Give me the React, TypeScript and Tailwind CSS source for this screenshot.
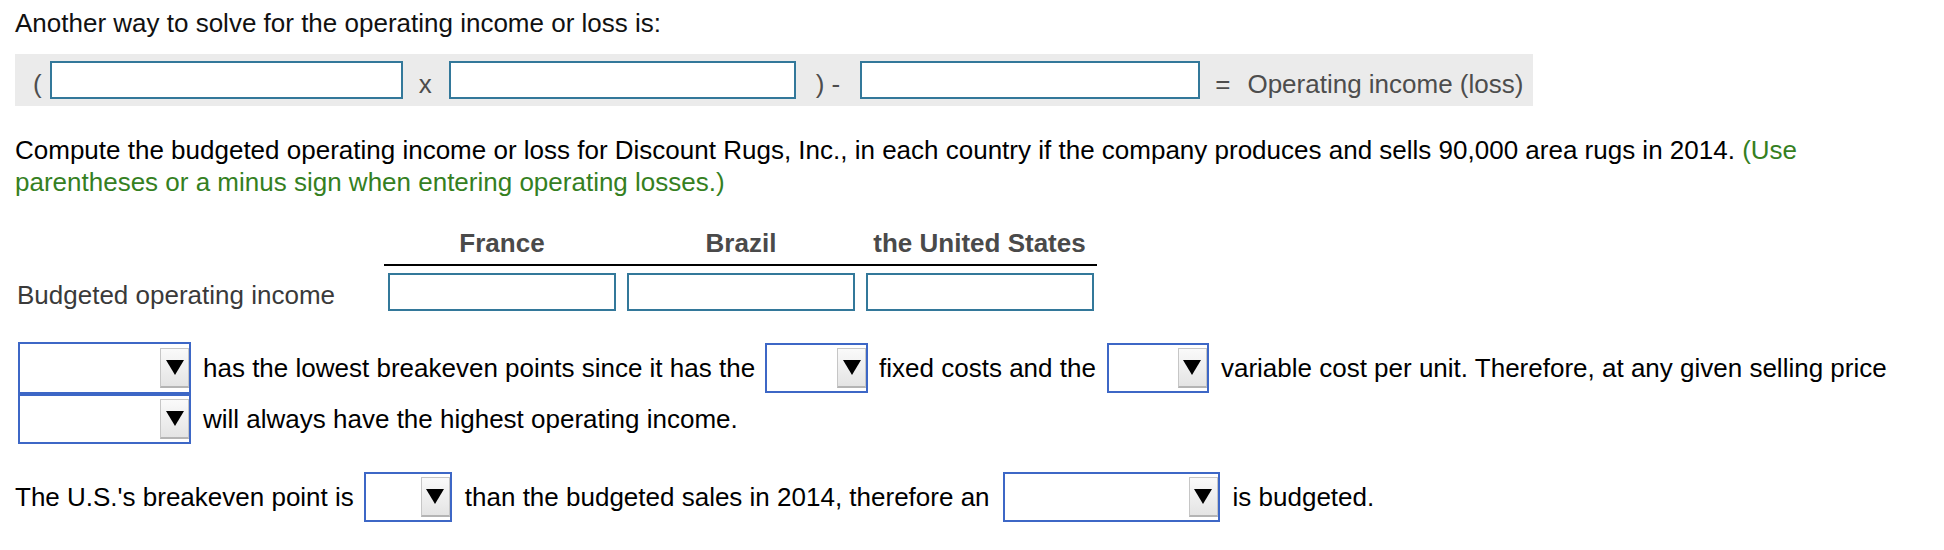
import React from "react";

/**
 * Select box with a grey arrow button on its right edge.
 */
function Dropdown({ width, height, className = "" }: { width: string; height: string; className?: string }) {
  return (
    <div
      className={`${width} ${height} ${className} shrink-0 flex items-center justify-end border-2 border-[#3d67c6] bg-white`}
    >
      <div className="w-[29px] h-[40px] flex items-center justify-center border border-[#c6c6c6] border-b-2 border-b-[#b4b4b4] bg-gradient-to-b from-[#fafafa] to-[#e4e4e4]">
        <svg width="18" height="15" viewBox="0 0 18 15">
          <polygon points="0,0 18,0 9,15" fill="#000" />
        </svg>
      </div>
    </div>
  );
}

function Box({ width }: { width: string }) {
  return <div className={`${width} h-[38px] shrink-0 border-2 border-[#33789a] bg-white`} />;
}

export default function App() {
  return (
    <div className="w-[1944px] h-[550px] bg-white text-[26px] text-black font-['Liberation_Sans',Arial,sans-serif] overflow-hidden">
      {/* Title */}
      <div className="pt-[8px] pl-[15px] leading-[30px] text-[#111]">
        Another way to solve for the operating income or loss is:
      </div>

      {/* Formula */}
      <div className="mt-[16px] ml-[15px] w-[1518px] h-[52px] bg-[#ebebeb] flex items-center text-[#4d4d4d] leading-none">
        <span className="ml-[18px] mr-[8px] pt-[8px]">(</span>
        <Box width="w-[353px]" />
        <span className="ml-[16px] mr-[17px] pt-[8px]">x</span>
        <Box width="w-[347px]" />
        <span className="ml-[20px] mr-[20px] pt-[8px]">) -</span>
        <Box width="w-[340px]" />
        <span className="ml-[15px] mr-[17px] pt-[8px]">=</span>
        <span className="pt-[8px]">Operating income (loss)</span>
      </div>

      {/* Instructions */}
      <p className="mt-[28px] pl-[15px] w-[1830px] leading-[32px]">
        Compute the budgeted operating income or loss for Discount Rugs, Inc., in each country if the company produces
        and sells 90,000 area rugs in 2014.{" "}
        <span className="text-[#35801f]">(Use parentheses or a minus sign when entering operating losses.)</span>
      </p>

      {/* Table */}
      <div className="mt-[30px] ml-[384px] w-[713px] flex border-b-2 border-black font-bold text-[#4a4a4a] leading-[30px] pb-[6px]">
        <div className="w-[236px] text-center">France</div>
        <div className="w-[242px] text-center">Brazil</div>
        <div className="w-[235px] text-center">the United States</div>
      </div>
      <div className="mt-[7px] flex items-center pl-[15px]">
        <div className="w-[373px] pl-[2px] pt-[5px] text-[#3a3a3a] leading-[30px]">Budgeted operating income</div>
        <div className="flex gap-[11px]">
          <Box width="w-[228px]" />
          <Box width="w-[228px]" />
          <Box width="w-[228px]" />
        </div>
      </div>

      {/* Breakeven statements */}
      <div className="mt-[31px] pl-[18px] leading-[30px]">
        <div className="flex items-center h-[52px]">
          <Dropdown width="w-[173px]" height="h-[52px]" />
          <span className="ml-[12px] whitespace-nowrap">has the lowest breakeven points since it has the</span>
          <Dropdown width="w-[103px]" height="h-[50px]" className="ml-[10px]" />
          <span className="ml-[11px] whitespace-nowrap">fixed costs and the</span>
          <Dropdown width="w-[102px]" height="h-[50px]" className="ml-[11px]" />
          <span className="ml-[12px] whitespace-nowrap">variable cost per unit. Therefore, at any given selling price</span>
        </div>
        <div className="flex items-center h-[50px]">
          <Dropdown width="w-[173px]" height="h-[50px]" />
          <span className="ml-[12px] whitespace-nowrap">will always have the highest operating income.</span>
        </div>
      </div>

      <div className="mt-[28px] pl-[15px] flex items-center h-[50px] leading-[30px]">
        <span className="whitespace-nowrap">The U.S.'s breakeven point is</span>
        <Dropdown width="w-[88px]" height="h-[50px]" className="ml-[10px]" />
        <span className="ml-[13px] whitespace-nowrap">than the budgeted sales in 2014, therefore an</span>
        <Dropdown width="w-[217px]" height="h-[50px]" className="ml-[13px]" />
        <span className="ml-[13px] whitespace-nowrap">is budgeted.</span>
      </div>
    </div>
  );
}
